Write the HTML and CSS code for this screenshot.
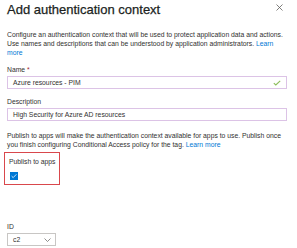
FILE: index.html
```html
<!DOCTYPE html>
<html lang="en">
<head>
  <meta charset="UTF-8">
  <meta name="viewport" content="width=device-width, initial-scale=1.0">
  <title>Add authentication context</title>
  <link rel="stylesheet" href="styles.css">
</head>
<body>
  <div class="panel">
    <div class="panel-header">
      <h1>Add authentication context</h1>
      <svg class="close" width="7" height="7" viewBox="0 0 7 7">
        <path d="M0.5 0.5 L6.5 6.5 M6.5 0.5 L0.5 6.5" stroke="#605e5c" stroke-width="0.8" fill="none"/>
      </svg>
    </div>

    <p class="intro">Configure an authentication context that will be used to protect application data and actions. Use names and descriptions that can be understood by application administrators. <a href="#">Learn more</a></p>

    <div class="form-group">
      <label>Name <span class="required">*</span></label>
      <div class="text-box">
        <span>Azure resources - PIM</span>
        <svg class="valid" width="8" height="6" viewBox="0 0 8 6">
          <path d="M0.8 3.2 L2.8 5 L7.2 0.8" stroke="#8cbd5a" stroke-width="1.1" fill="none"/>
        </svg>
      </div>
    </div>

    <div class="form-group">
      <label>Description</label>
      <div class="text-box">
        <span>High Security for Azure AD resources</span>
      </div>
    </div>

    <p class="publish-note">Publish to apps will make the authentication context available for apps to use. Publish once you finish configuring Conditional Access policy for the tag. <a href="#">Learn more</a></p>

    <div class="publish-box">
      <label>Publish to apps</label>
      <div class="checkbox">
        <svg width="8" height="8" viewBox="0 0 8 8">
          <path d="M1.6 4.1 L3.2 5.6 L6.4 2.3" stroke="#fff" stroke-width="0.8" fill="none"/>
        </svg>
      </div>
    </div>

    <div class="form-group id-group">
      <label>ID</label>
      <div class="select-box">
        <span>c2</span>
        <svg width="7" height="4" viewBox="0 0 7 4">
          <path d="M0.5 0.5 L3.5 3.5 L6.5 0.5" stroke="#605e5c" stroke-width="0.7" fill="none"/>
        </svg>
      </div>
    </div>
  </div>
</body>
</html>
```

FILE: styles.css
```css
body {
  margin: 0;
  background: #fff;
  font-family: 'Liberation Sans', Arial, sans-serif;
  color: #323130;
}
.panel {
  padding: 2px 10px 0 7px;
}
.panel-header {
  display: flex;
  justify-content: space-between;
  align-items: center;
}
h1 {
  margin: 0;
  font-size: 13px;
  line-height: 16px;
  font-weight: normal;
  color: #201f1e;
  -webkit-text-stroke: 0.25px #201f1e;
}
.close {
  margin-right: 4px;
  margin-top: -6px;
}
p {
  margin: 0;
  font-size: 6.8px;
  line-height: 9px;
}
a {
  color: #0078d4;
  text-decoration: none;
}
.intro {
  margin-top: 12px;
}
.form-group {
  margin-top: 8px;
}
label {
  display: block;
  font-size: 6.8px;
  line-height: 9px;
  margin-bottom: 2px;
}
.required {
  color: #a4262c;
}
.text-box {
  height: 11px;
  border: 1px solid #dcc3e6;
  display: flex;
  align-items: center;
  justify-content: space-between;
  padding: 0 5px 0 5px;
  font-size: 6.8px;
}
.publish-note {
  margin-top: 10px;
}
.publish-box {
  width: 47px;
  margin: 3px 0 0 -3px;
  padding: 4px 3px 4px 4px;
  border: 1.5px solid #d9474c;
}
.publish-box label {
  margin-bottom: 6px;
}
.checkbox {
  width: 8px;
  height: 8px;
  margin-left: 1px;
  background: #0078d4;
  display: flex;
}
.id-group {
  margin-top: 37px;
}
.select-box {
  width: 38px;
  height: 11px;
  border: 1px solid #c8c6c4;
  display: flex;
  align-items: center;
  justify-content: space-between;
  padding: 0 4px 0 5px;
  font-size: 6.8px;
}
```
